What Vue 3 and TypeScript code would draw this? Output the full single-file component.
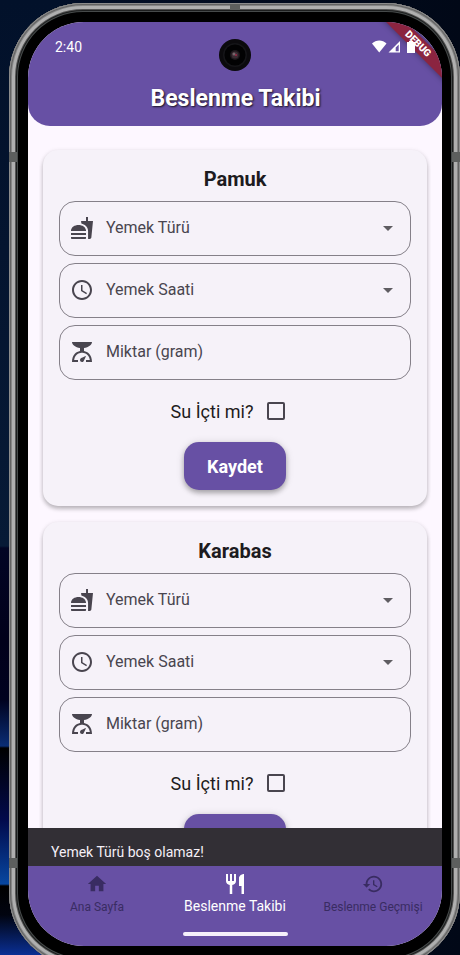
<script setup lang="ts">
import { reactive, ref } from 'vue'

interface Meal {
  id: string
  pet: string
  kind: string
  time: string
  amount: string
  drank: boolean
}

const meals = reactive<Meal[]>([
  { id: 'pamuk', pet: 'Pamuk', kind: '', time: '', amount: '', drank: false },
  { id: 'karabas', pet: 'Karabas', kind: '', time: '', amount: '', drank: false },
])

const message = ref('Yemek Türü boş olamaz!')

const tabs = [
  { label: 'Ana Sayfa', active: false, icon: 'M10 20v-6h4v6h5v-8h3L12 3 2 12h3v8z' },
  {
    label: 'Beslenme Takibi',
    active: true,
    icon: 'M11 9H9V2H7v7H5V2H3v7c0 2.12 1.66 3.84 3.75 3.97V22h2.5v-9.03C11.34 12.84 13 11.12 13 9V2h-2v7zm5-3v8h2.5v8H21V2c-2.76 0-5 2.24-5 4z',
  },
  {
    label: 'Beslenme Geçmişi',
    active: false,
    icon: 'M13 3c-4.97 0-9 4.03-9 9H1l3.89 3.89.07.14L9 12H6c0-3.87 3.13-7 7-7s7 3.13 7 7-3.13 7-7 7c-1.93 0-3.68-.79-4.94-2.06l-1.42 1.42C8.27 19.99 10.51 21 13 21c4.97 0 9-4.03 9-9s-4.03-9-9-9zm-1 5v5l4.28 2.54.72-1.21-3.5-2.08V8H12z',
  },
]

function save(meal: Meal) {
  if (!meal.kind) message.value = 'Yemek Türü boş olamaz!'
}
</script>

<template>
  <div class="desk">
    <div class="phone">
      <i class="seam seam-top"></i>
      <i class="seam seam-left upper"></i>
      <i class="seam seam-left lower"></i>
      <i class="seam seam-right upper"></i>
      <i class="seam seam-right lower"></i>

      <div class="screen">
        <header class="appbar">
          <div class="status">
            <span>2:40</span>
            <svg class="signals" width="44" height="14" viewBox="0 0 44 14" aria-hidden="true">
              <path d="M0 3.6C4-.6 10.500-.6 14.500 3.600L7.200 12.600z" fill="#fff" />
              <path d="M28 1v11.500H16.500zM26.700 4.500l-3 3v3.800h3z" fill="#fff" fill-rule="evenodd" />
              <path d="M35 2h2V1h4v1h2v11h-8z" fill="#fff" />
            </svg>
          </div>
          <h1>Beslenme Takibi</h1>
        </header>
        <div class="debug">DEBUG</div>
        <svg class="camera" viewBox="0 0 32 32" aria-hidden="true">
          <circle cx="16" cy="16" r="16" fill="#0b0a0d" />
          <circle cx="16" cy="16" r="12" fill="#151518" />
          <circle cx="16" cy="16" r="10.500" fill="#020203" />
          <circle cx="16" cy="16" r="5" fill="#1d171b" />
          <circle cx="16" cy="16" r="3.500" fill="#3b2c33" />
          <circle cx="15" cy="15" r="1.500" fill="#75666b" />
          <circle cx="17" cy="16" r="1" fill="#a02848" />
        </svg>

        <main class="content">
          <form v-for="meal in meals" :key="meal.id" class="card" @submit.prevent="save(meal)">
            <h2>{{ meal.pet }}</h2>

            <div class="field">
              <svg class="icon" viewBox="0 0 24 24" aria-hidden="true">
                <path d="M18.060 22.990h1.660c.84 0 1.530-.64 1.630-1.460L23 5.050h-5V1h-1.970v4.050h-4.970l.3 2.340c1.710.47 3.310 1.320 4.270 2.260 1.440 1.420 2.430 2.890 2.430 5.290v8.050zM1 21.990V21h15.030v.99c0 .55-.45 1-1.010 1H2.010c-.56 0-1.010-.45-1.010-1zm15.030-7c0-8-15.030-8-15.030 0h15.030zM1.020 17h15v2h-15z" />
              </svg>
              <div class="entry">
                <label v-show="!meal.kind" :for="`${meal.id}-kind`">Yemek Türü</label>
                <select :id="`${meal.id}-kind`" v-model="meal.kind">
                  <option value=""></option>
                </select>
              </div>
              <svg class="caret" viewBox="0 0 24 24" aria-hidden="true"><path d="M7 10l5 5 5-5z" /></svg>
            </div>

            <div class="field">
              <svg class="icon" viewBox="0 0 24 24" aria-hidden="true">
                <path d="M11.990 2C6.470 2 2 6.480 2 12s4.470 10 9.990 10C17.520 22 22 17.520 22 12S17.520 2 11.990 2zM12 20c-4.420 0-8-3.580-8-8s3.580-8 8-8 8 3.580 8 8-3.580 8-8 8zm.5-13H11v6l5.250 3.150.75-1.230-4.500-2.670z" />
              </svg>
              <div class="entry">
                <label v-show="!meal.time" :for="`${meal.id}-time`">Yemek Saati</label>
                <select :id="`${meal.id}-time`" v-model="meal.time">
                  <option value=""></option>
                </select>
              </div>
              <svg class="caret" viewBox="0 0 24 24" aria-hidden="true"><path d="M7 10l5 5 5-5z" /></svg>
            </div>

            <div class="field">
              <svg class="icon" viewBox="0 0 24 24" aria-hidden="true">
                <path d="M14 11V8c4.560-.58 8-3.100 8-6H2c0 2.900 3.440 5.420 8 6v3c-3.680.73-8 3.610-8 11h6v-2H4.130c.93-6.830 6.650-7.200 7.870-7.200s6.940.37 7.870 7.200H16v2h6c0-7.390-4.320-10.270-8-11z" />
                <path d="M12 22c-1.100 0-2-.9-2-2 0-.55.22-1.050.59-1.410C11.390 17.790 16 16 16 16s-1.790 4.610-2.590 5.410c-.36.37-.86.59-1.410.59z" />
              </svg>
              <div class="entry">
                <label v-show="!meal.amount" :for="`${meal.id}-amount`">Miktar (gram)</label>
                <input :id="`${meal.id}-amount`" v-model="meal.amount" type="text" inputmode="numeric" />
              </div>
            </div>

            <div class="water">
              <label :for="`${meal.id}-water`">Su İçti mi?</label>
              <input :id="`${meal.id}-water`" v-model="meal.drank" type="checkbox" />
            </div>

            <button class="save" type="submit">Kaydet</button>
          </form>
        </main>

        <div class="snackbar" role="status">{{ message }}</div>

        <nav class="tabs">
          <ul>
            <li v-for="tab in tabs" :key="tab.label">
              <a href="#" :class="{ active: tab.active }">
                <svg viewBox="0 0 24 24" aria-hidden="true"><path :d="tab.icon" /></svg>
                <span>{{ tab.label }}</span>
              </a>
            </li>
          </ul>
          <div class="gesture"></div>
        </nav>
      </div>
    </div>
  </div>
</template>

<style>
body {
  margin: 0;
}
</style>

<style scoped>
.desk {
  display: flex;
  box-sizing: border-box;
  height: 100vh;
  overflow: hidden;
  padding: 3px 0 0 9px;
  font-family: Roboto, 'Noto Sans', sans-serif;
  color: #1d1b20;
  background:
    linear-gradient(180deg, #02112a 0, #04142f 250px, #071a36 546px, #020524 548px, #01001a 640px, #00021f 700px, #0a2d74 746px, #000 748px, #020a4c 820px, #0747a0 884px, #000 886px, #010410 915px, #0a2f94 955px) left / 60px 100% no-repeat,
    linear-gradient(90deg, #02102a, #010817);
}

.phone {
  position: relative;
  flex: 1;
  box-sizing: border-box;
  margin-bottom: -12px;
  padding: 19px 18px 21px 19px;
  border-radius: 74px;
  background: #000;
  box-shadow:
    inset 0 0 0 1px #8c8c8c,
    inset 0 0 0 2px #636363,
    inset 0 0 0 3px #868686,
    inset 0 0 0 6px #afafaf,
    inset 0 0 0 7px #555,
    inset 0 0 0 8px #1c1e1e,
    inset 0 0 0 9px #464a4a;
  display: flex;
}

.seam {
  position: absolute;
  background: #5d5f5e;
}

.seam-top {
  top: 1px;
  left: calc(50% - 5px);
  width: 10px;
  height: 6px;
}

.seam-left,
.seam-right {
  width: 8px;
  height: 10px;
}

.seam-left {
  left: 0;
}

.seam-right {
  right: 0;
}

.upper {
  top: 149px;
}

.lower {
  bottom: 99px;
}

.screen {
  position: relative;
  flex: 1;
  min-width: 0;
  display: flex;
  flex-direction: column;
  overflow: hidden;
  border-radius: 56px;
  background: #fdf7ff;
}

.appbar {
  box-sizing: border-box;
  height: 104px;
  padding: 15px 26px 0 27px;
  border-radius: 0 0 22px 22px;
  background: #6750a4;
  color: #fff;
}

.status {
  position: relative;
  z-index: 2;
  display: flex;
  align-items: center;
  justify-content: space-between;
  height: 20px;
  font-size: 14px;
}

h1 {
  margin: 26px 0 0;
  font-size: 23px;
  line-height: 32px;
  font-weight: 700;
  text-align: center;
  text-shadow: 1px 1px 2px rgba(0, 0, 0, 0.8);
}

.debug {
  position: absolute;
  z-index: 1;
  top: 15px;
  right: -36px;
  width: 120px;
  height: 14px;
  background: #8b2440;
  box-shadow: 0 0 6px rgba(0, 0, 0, 0.4);
  color: #fff;
  font-size: 10px;
  line-height: 14px;
  font-weight: 900;
  text-align: center;
  transform: rotate(45deg);
}

.camera {
  position: absolute;
  top: 17px;
  left: calc(50% - 16px);
  width: 32px;
  height: 32px;
}

.content {
  flex: 1;
  min-height: 0;
  overflow-y: auto;
  scrollbar-width: none;
  padding: 24px 15px 16px;
  display: flex;
  flex-direction: column;
  gap: 16px;
}

.card {
  flex: none;
  display: flex;
  flex-direction: column;
  gap: 7px;
  padding: 16px;
  border-radius: 15px;
  background: #f6f2f9;
  box-shadow:
    0 3px 4px rgba(0, 0, 0, 0.22),
    0 1px 5px rgba(0, 0, 0, 0.1);
}

h2 {
  margin: 0 0 2px;
  font-size: 20px;
  line-height: 26px;
  font-weight: 700;
  text-align: center;
}

.field {
  box-sizing: border-box;
  height: 55px;
  padding: 0 10px 2px;
  display: flex;
  align-items: center;
  gap: 12px;
  border: 1px solid #858089;
  border-radius: 16px;
}

.field svg {
  flex: none;
  width: 24px;
  height: 24px;
  fill: #49454f;
}

.field .caret {
  fill: #5f5d62;
}

.entry {
  flex: 1;
  min-width: 0;
  display: grid;
  align-items: center;
}

.entry > * {
  grid-area: 1 / 1;
}

.entry label {
  pointer-events: none;
  font-size: 16px;
  line-height: 24px;
  color: #49454f;
}

.entry select,
.entry input {
  appearance: none;
  box-sizing: border-box;
  width: 100%;
  height: 48px;
  padding: 0;
  border: 0;
  outline: 0;
  background: transparent;
  color: #1d1b20;
  font: inherit;
  font-size: 16px;
}

.water {
  display: flex;
  align-items: center;
  justify-content: center;
  gap: 14px;
  height: 48px;
  padding-right: 14px;
  font-size: 18px;
}

.water input {
  appearance: none;
  box-sizing: border-box;
  width: 18px;
  height: 18px;
  margin: 0;
  border: 2px solid #49454f;
  border-radius: 2px;
}

.water input:checked {
  background: #6750a4;
  border-color: #6750a4;
}

.save {
  align-self: center;
  height: 48px;
  padding: 0 23px;
  border: 0;
  border-radius: 15px;
  background: #6750a4;
  color: #fff;
  font: inherit;
  font-size: 18px;
  font-weight: 700;
  box-shadow:
    0 3px 5px rgba(0, 0, 0, 0.26),
    0 1px 8px rgba(0, 0, 0, 0.14);
}

.snackbar {
  position: relative;
  padding: 16px 23px 6px;
  background: #322f35;
  color: #f5eff7;
  font-size: 14px;
  line-height: 16px;
}

.tabs {
  position: relative;
  display: flex;
  flex-direction: column;
  align-items: center;
  box-sizing: border-box;
  height: 80px;
  padding-bottom: 10px;
  background: #6750a4;
}

.tabs ul {
  flex: 1;
  align-self: stretch;
  display: flex;
  margin: 0;
  padding: 0;
  list-style: none;
}

.tabs li {
  flex: 1 1 0;
  min-width: 0;
}

.tabs a {
  display: flex;
  flex-direction: column;
  align-items: center;
  padding-top: 6px;
  color: #392c62;
  font-size: 12px;
  line-height: 22px;
  white-space: nowrap;
  text-decoration: none;
}

.tabs svg {
  width: 22px;
  height: 24px;
  fill: currentColor;
}

.tabs .active {
  color: #fff;
  font-size: 14px;
  line-height: 20px;
}

.tabs .active svg {
  width: 24px;
}

.gesture {
  width: 105px;
  height: 4px;
  border-radius: 2px;
  background: #f6f1fb;
}
</style>
